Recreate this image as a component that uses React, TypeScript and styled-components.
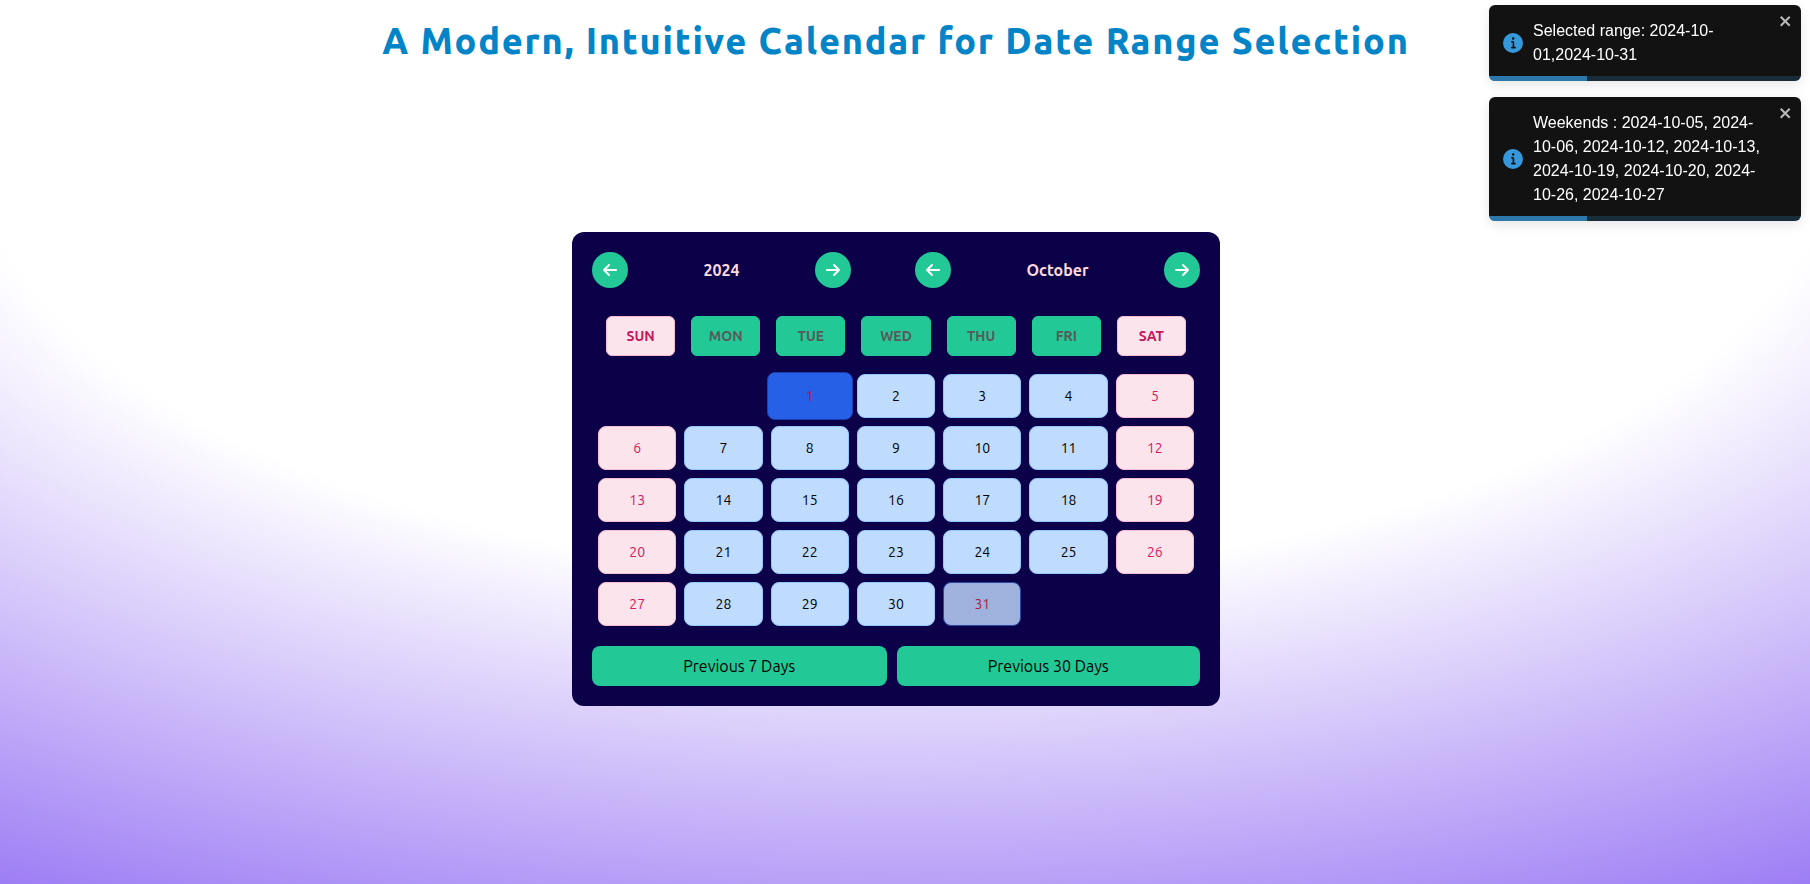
import React from "react";
import styled, { createGlobalStyle, css } from "styled-components";
import { FaArrowLeft, FaArrowRight } from "react-icons/fa6";

const GlobalStyle = createGlobalStyle`
  *, *::before, *::after { box-sizing: border-box; }
  body {
    margin: 0;
    font-family: Ubuntu, "Noto Sans", sans-serif;
    font-size: 16px;
    line-height: 24px;
    color: #000;
  }
  button { font: inherit; color: inherit; border: 0; padding: 0; cursor: pointer; }
`;

const Page = styled.div`
  min-height: 100vh;
  display: flex;
  flex-direction: column;
  align-items: center;
  padding: 20px 18px 20px 0;
  background: #fff radial-gradient(129% 126% at 50% 10%, #fff 40%, #6633ee 100%)
    0 40px / 100% 100% no-repeat;
`;

const Title = styled.h1`
  margin: 0;
  font-size: 36px;
  line-height: 42px;
  font-weight: 800;
  letter-spacing: 0.05em;
  text-align: center;
  color: #0284c7;
`;

const Stage = styled.main`
  flex: 1;
  display: flex;
  align-items: center;
  padding-top: 12px;
`;

const Card = styled.section`
  width: 648px;
  max-width: 100%;
  padding: 20px;
  border-radius: 12px;
  background: #0c0049;
`;

const Header = styled.header`
  display: flex;
  gap: 64px;
  margin-bottom: 28px;
`;

const Stepper = styled.div`
  flex: 1 1 auto;
  display: flex;
  align-items: center;
  justify-content: space-between;
  font-weight: 600;
  color: #fbd9dc;
`;

const RoundButton = styled.button`
  display: grid;
  place-items: center;
  width: 36px;
  height: 36px;
  border-radius: 50%;
  background: #22c997;
  color: #fff;
`;

const WeekRow = styled.div`
  display: grid;
  grid-template-columns: repeat(7, 1fr);
  gap: 16px;
  padding: 0 14px;
  margin-bottom: 18px;
`;

const WeekDay = styled.div<{ $weekend: boolean }>`
  height: 40px;
  display: grid;
  place-items: center;
  border-radius: 6px;
  border: 1px solid ${(p) => (p.$weekend ? "#f8bbd0" : "#22c997")};
  background: ${(p) => (p.$weekend ? "#fce4ec" : "#22c997")};
  color: ${(p) => (p.$weekend ? "#c2185b" : "#5a5a5a")};
  font-size: 14px;
  line-height: 20px;
  font-weight: 600;
`;

const DayGrid = styled.div`
  display: grid;
  grid-template-columns: repeat(7, 1fr);
  gap: 8px;
  padding: 0 6px;
  margin-bottom: 20px;
`;

type Kind = "plain" | "weekend" | "start" | "end";

const dayLook = {
  plain: css`background: #bfdbfe; border-color: #93c5fd;`,
  weekend: css`background: #fce4ec; border-color: #f8bbd0; color: #d02060;`,
  start: css`
    margin: -2px -4px;
    height: 48px;
    background: #2560e6;
    border-color: #1e40af;
    color: #a81c3c;
  `,
  end: css`background: #9fb1dd; border-color: #2b479f; color: #a81c3c;`,
};

const Day = styled.button<{ $kind: Kind }>`
  height: 44px;
  border: 1px solid transparent;
  border-radius: 8px;
  font-size: 14px;
  line-height: 20px;
  ${(p) => dayLook[p.$kind]}
`;

const Presets = styled.div`
  display: flex;
  gap: 10px;
`;

const PresetButton = styled.button`
  flex: 1 1 auto;
  height: 40px;
  border-radius: 8px;
  background: #22c997;
`;

const Toasts = styled.div`
  position: fixed;
  top: 5px;
  right: 9px;
  width: 312px;
  display: flex;
  flex-direction: column;
  gap: 16px;
  font-family: "Liberation Sans", Arial, sans-serif;
`;

const Toast = styled.div`
  position: relative;
  display: flex;
  padding: 8px;
  border-radius: 6px;
  overflow: hidden;
  background: #121212;
  color: #fff;
  box-shadow: 0 4px 12px rgba(0, 0, 0, 0.1);
`;

const ToastBody = styled.div`
  flex: 1;
  display: flex;
  align-items: center;
  gap: 10px;
  padding: 6px;
`;

const InfoIcon = styled.svg`
  flex: none;
  width: 20px;
  height: 20px;
  fill: #3498db;
`;

const CloseButton = styled.button`
  align-self: flex-start;
  display: flex;
  background: none;
  opacity: 0.7;
`;

const Track = styled.div`
  position: absolute;
  left: 0;
  right: 0;
  bottom: 0;
  height: 5px;
  background: rgba(52, 152, 219, 0.2);
`;

const Progress = styled.div`
  height: 100%;
  background: rgba(52, 152, 219, 0.7);
`;

const weekDays = ["SUN", "MON", "TUE", "WED", "THU", "FRI", "SAT"];
const firstWeekday = 2;
const daysInMonth = 31;
const remaining = 0.315;

const messages = [
  "Selected range: 2024-10-01,2024-10-31",
  "Weekends : 2024-10-05, 2024-10-06, 2024-10-12, 2024-10-13, 2024-10-19, 2024-10-20, 2024-10-26, 2024-10-27",
];

function kindOf(day: number): Kind {
  if (day === 1) return "start";
  if (day === daysInMonth) return "end";
  const weekday = (day - 1 + firstWeekday) % 7;
  return weekday === 0 || weekday === 6 ? "weekend" : "plain";
}

function Step({ unit, value }: { unit: string; value: string }) {
  return (
    <Stepper>
      <RoundButton aria-label={`Previous ${unit}`}><FaArrowLeft size={16} /></RoundButton>
      <span>{value}</span>
      <RoundButton aria-label={`Next ${unit}`}><FaArrowRight size={16} /></RoundButton>
    </Stepper>
  );
}

export default function App() {
  return (
    <>
      <GlobalStyle />
      <Page>
        <Title>A Modern, Intuitive Calendar for Date Range Selection</Title>
        <Stage>
          <Card>
            <Header>
              <Step unit="year" value="2024" />
              <Step unit="month" value="October" />
            </Header>
            <WeekRow>
              {weekDays.map((name, i) => (
                <WeekDay key={name} $weekend={i === 0 || i === 6}>{name}</WeekDay>
              ))}
            </WeekRow>
            <DayGrid>
              {Array.from({ length: firstWeekday }, (_, i) => <span key={`blank${i}`} />)}
              {Array.from({ length: daysInMonth }, (_, i) => (
                <Day key={i} $kind={kindOf(i + 1)}>{i + 1}</Day>
              ))}
            </DayGrid>
            <Presets>
              <PresetButton>Previous 7 Days</PresetButton>
              <PresetButton>Previous 30 Days</PresetButton>
            </Presets>
          </Card>
        </Stage>
      </Page>
      <Toasts>
        {messages.map((text) => (
          <Toast key={text} role="alert">
            <ToastBody>
              <InfoIcon viewBox="0 0 24 24" aria-hidden="true">
                <path d="M12 0a12 12 0 1012 12A12.013 12.013 0 0012 0zm.25 5a1.5 1.5 0 11-1.5 1.5 1.5 1.5 0 011.5-1.5zm2.25 13.5h-4a1 1 0 010-2h.75a.25.25 0 00.25-.25v-4.5a.25.25 0 00-.25-.25h-.75a1 1 0 010-2h1a2 2 0 012 2v4.75a.25.25 0 00.25.25h.75a1 1 0 110 2z" />
              </InfoIcon>
              <div>{text}</div>
            </ToastBody>
            <CloseButton aria-label="close">
              <svg width="14" height="16" viewBox="0 0 14 16" fill="currentColor" aria-hidden="true">
                <path fillRule="evenodd" d="M7.71 8.23l3.75 3.75-1.48 1.48-3.75-3.75-3.75 3.75L1 11.98l3.75-3.75L1 4.48 2.48 3l3.75 3.75L9.98 3l1.48 1.48-3.75 3.75z" />
              </svg>
            </CloseButton>
            <Track>
              <Progress style={{ width: `${remaining * 100}%` }} />
            </Track>
          </Toast>
        ))}
      </Toasts>
    </>
  );
}
